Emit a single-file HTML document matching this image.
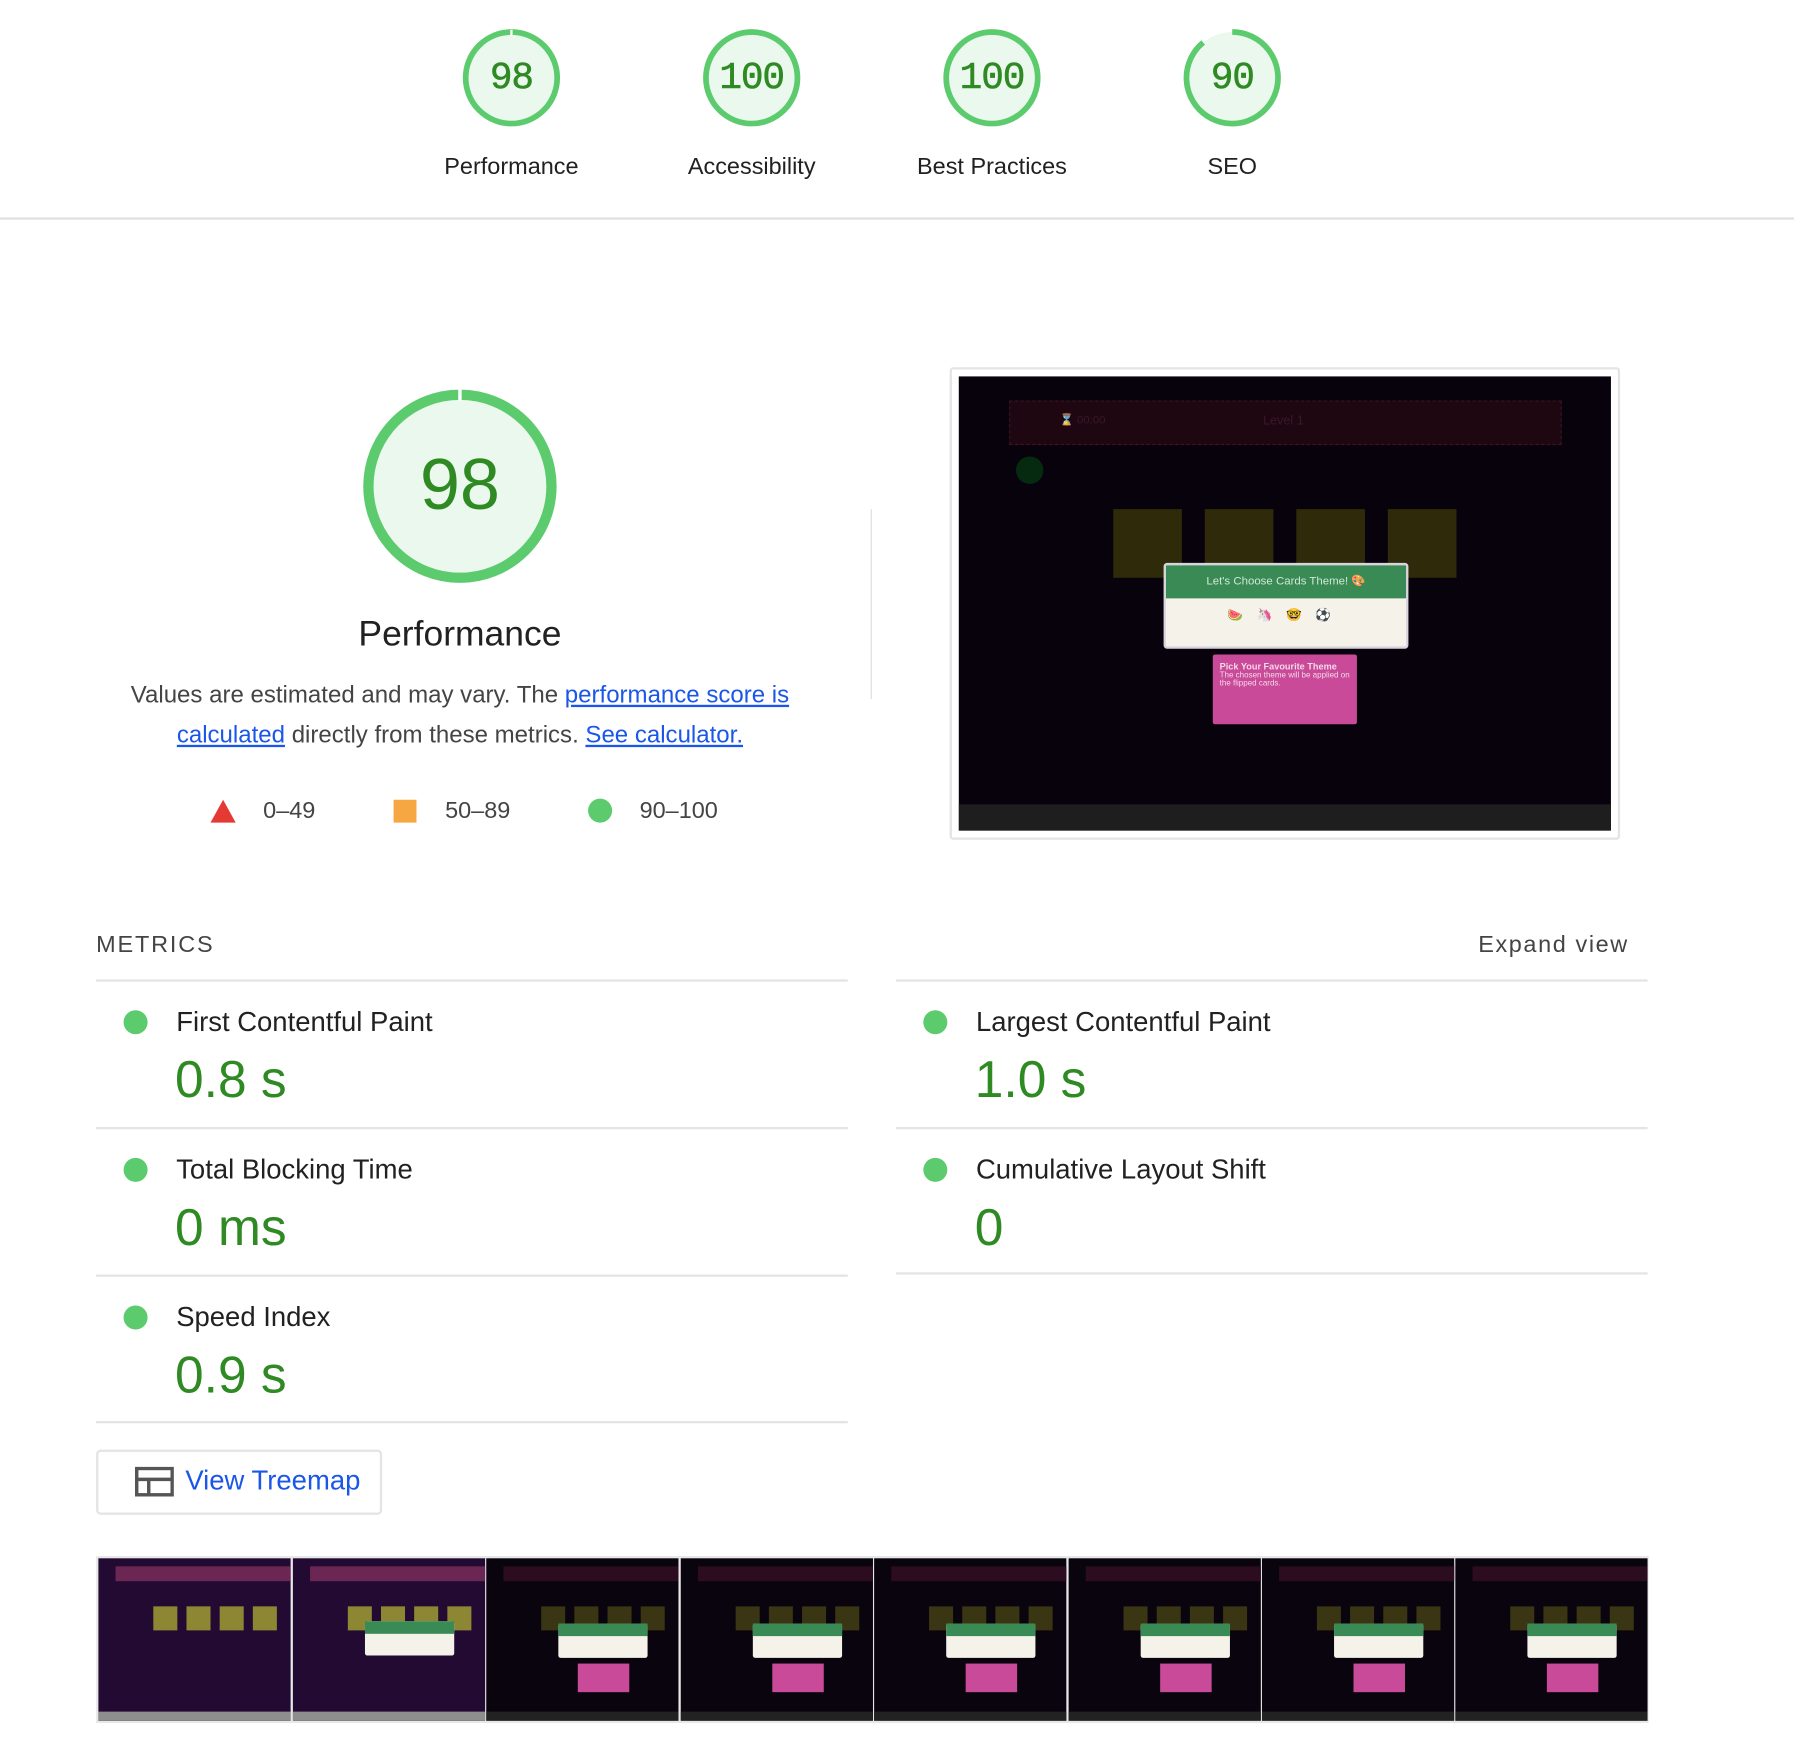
<!DOCTYPE html>
<html><head><meta charset="utf-8"><style>
html,body{margin:0;padding:0;background:#fff;width:1794px;height:1746px;overflow:hidden}
#w{position:absolute;left:0;top:0;width:1568px;height:1526px;transform:scale(1.14413);transform-origin:0 0;font-family:"Liberation Sans",Arial,sans-serif;color:#212121}
.a{position:absolute}
.gn{position:absolute;left:0;top:0;width:84px;line-height:84px;text-align:center;font-family:"Liberation Mono",monospace;font-size:33px;color:#2f8a24;letter-spacing:-1px;-webkit-text-stroke:0.5px #2f8a24}
.gl{position:absolute;width:200px;text-align:center;font-size:20.5px;top:134px}
.mt{position:absolute;font-size:24px;color:#212121}
.mv{position:absolute;font-size:45px;color:#2f8a24}
.dot{position:absolute;width:21px;height:21px;border-radius:50%;background:#5ccb6d}
.hl{position:absolute;height:2px;background:#e4e4e4;width:657px}
a{color:#1a56e8;text-decoration:underline}
.fr{position:absolute;top:1362px;width:168px;height:142px;overflow:hidden;background:#0a040e}
.fr.p{background:#230a33}
.fr .hd{position:absolute;left:15px;top:7px;width:160px;height:13px;background:#2c0d20}
.fr.p .hd{background:#6b2653}
.fr .cd{position:absolute;top:42px;width:21px;height:21px;background:#3a3512}
.fr.p .cd{background:#8d8733}
.fr .bt{position:absolute;left:0;bottom:0;width:168px;height:8px;background:#222}
.fr.p .bt{background:#8e8e8e}
.fr .md{position:absolute;left:63px;top:57px;width:78px;height:30px;background:#f5f2ea;border-radius:2px}
.fr .md div{height:11px;background:#3a8a55}
.fr .tp{position:absolute;left:80px;top:92px;width:45px;height:25px;background:#c84a98}
</style></head><body><div id="w">

<svg class="a" style="left:0;top:0" width="1568" height="190">
<g fill="#ebf8ee" stroke="#5ccb6d" stroke-width="5">
<circle cx="447" cy="68" r="40"/>
<circle cx="657" cy="68" r="40"/>
<circle cx="867" cy="68" r="40"/>
<circle cx="1077" cy="68" r="40" stroke="none"/>
</g>
<path d="M1077 28 A40 40 0 1 1 1051.6 37.1" fill="none" stroke="#5ccb6d" stroke-width="5"/>
<line x1="447" y1="26" x2="447" y2="31" stroke="#fff" stroke-width="2"/>
</svg>
<div class="gn" style="left:405px;top:27px">98</div>
<div class="gn" style="left:615px;top:27px">100</div>
<div class="gn" style="left:825px;top:27px">100</div>
<div class="gn" style="left:1035px;top:27px">90</div>
<div class="gl" style="left:347px">Performance</div>
<div class="gl" style="left:557px">Accessibility</div>
<div class="gl" style="left:767px">Best Practices</div>
<div class="gl" style="left:977px">SEO</div>
<div class="a" style="left:0;top:190px;width:1568px;height:2px;background:#e0e0e0"></div>

<svg class="a" style="left:312px;top:335px" width="180" height="180">
<circle cx="90" cy="90" r="80" fill="#ebf8ee" stroke="#5ccb6d" stroke-width="9"/>
<line x1="90" y1="4" x2="90" y2="15" stroke="#fff" stroke-width="3"/>
</svg>
<div class="a" style="left:312px;top:388px;width:180px;text-align:center;font-size:63px;color:#2f8a24">98</div>
<div class="a" style="left:202px;top:536px;width:400px;text-align:center;font-size:31px">Performance</div>
<div class="a" style="left:82px;top:591px;width:640px;text-align:center;font-size:21px;line-height:34.5px;color:#444">Values are estimated and may vary. The <a>performance score is calculated</a> directly from these metrics. <a>See calculator.</a></div>
<svg class="a" style="left:183px;top:697px" width="26" height="24"><polygon points="12,2 23,22 1,22" fill="#e53935"/></svg>
<div class="a" style="left:230px;top:697px;font-size:20.5px;color:#444">0–49</div>
<div class="a" style="left:344px;top:699px;width:20px;height:20px;background:#f6a742"></div>
<div class="a" style="left:389px;top:697px;font-size:20.5px;color:#444">50–89</div>
<div class="a" style="left:514px;top:698px;width:21px;height:21px;border-radius:50%;background:#5ccb6d"></div>
<div class="a" style="left:559px;top:697px;font-size:20.5px;color:#444">90–100</div>
<div class="a" style="left:761px;top:445px;width:1px;height:166px;background:#ddd"></div>

<div class="a" style="left:830px;top:321px;width:582px;height:409px;border:2px solid #e4e4e4;border-radius:3px;background:#fff"></div>
<div class="a" style="left:838px;top:329px;width:570px;height:397px;background:#07020b;overflow:hidden">
 <div class="a" style="left:44px;top:21px;width:481px;height:37px;background:#1e0711;border:1px dashed #3a1324"></div>
 <div class="a" style="left:88px;top:33px;font-size:10px;color:#3a1828">⌛ 00:00</div>
 <div class="a" style="left:266px;top:33px;font-size:11px;color:#3a1828">Level 1</div>
 <div class="a" style="left:50px;top:70px;width:24px;height:24px;border-radius:50%;background:#062a10"></div>
 <div class="a" style="left:135px;top:116px;width:60px;height:60px;background:#2f2a0a"></div>
 <div class="a" style="left:215px;top:116px;width:60px;height:60px;background:#2f2a0a"></div>
 <div class="a" style="left:295px;top:116px;width:60px;height:60px;background:#2f2a0a"></div>
 <div class="a" style="left:375px;top:116px;width:60px;height:60px;background:#2f2a0a"></div>
 <div class="a" style="left:179px;top:163px;width:210px;height:71px;background:#f5f2ea;border:2px solid #d8d4dd;border-radius:3px;overflow:hidden">
  <div style="height:29px;background:#3a8a55;color:#cfe8d5;font-size:10px;text-align:center;line-height:29px">Let's Choose Cards Theme! 🎨</div>
  <div style="text-align:center;padding-top:8px;font-size:11px;letter-spacing:12px">🍉🦄🤓⚽</div>
 </div>
 <div class="a" style="left:222px;top:243px;width:126px;height:61px;background:#c84a98;border-radius:2px;color:#f6d9ea;font-size:7px;padding:6px;box-sizing:border-box"><b style="font-size:8px">Pick Your Favourite Theme</b><br>The chosen theme will be applied on the flipped cards.</div>
 <div class="a" style="left:0;top:374px;width:570px;height:23px;background:#1e1e1e"></div>
</div>

<div class="a" style="left:84px;top:814px;font-size:20.5px;letter-spacing:1.6px;color:#444">METRICS</div>
<div class="a" style="left:1292px;top:814px;font-size:20.5px;letter-spacing:1.4px;color:#444">Expand view</div>
<div class="hl" style="left:84px;top:856px"></div><div class="hl" style="left:783px;top:856px"></div>
<div class="hl" style="left:84px;top:985px"></div><div class="hl" style="left:783px;top:985px"></div>
<div class="hl" style="left:84px;top:1114px"></div><div class="hl" style="left:783px;top:1112px"></div>
<div class="hl" style="left:84px;top:1242px"></div>

<div class="dot" style="left:108px;top:883px"></div><div class="mt" style="left:154px;top:880px">First Contentful Paint</div><div class="mv" style="left:153px;top:918px">0.8 s</div>
<div class="dot" style="left:807px;top:883px"></div><div class="mt" style="left:853px;top:880px">Largest Contentful Paint</div><div class="mv" style="left:852px;top:918px">1.0 s</div>
<div class="dot" style="left:108px;top:1012px"></div><div class="mt" style="left:154px;top:1009px">Total Blocking Time</div><div class="mv" style="left:153px;top:1047px">0 ms</div>
<div class="dot" style="left:807px;top:1012px"></div><div class="mt" style="left:853px;top:1009px">Cumulative Layout Shift</div><div class="mv" style="left:852px;top:1047px">0</div>
<div class="dot" style="left:108px;top:1141px"></div><div class="mt" style="left:154px;top:1138px">Speed Index</div><div class="mv" style="left:153px;top:1176px">0.9 s</div>

<div class="a" style="left:84px;top:1267px;width:246px;height:53px;border:2px solid #e4e4e4;border-radius:4px"></div>
<svg class="a" style="left:118px;top:1282px" width="34" height="26"><rect x="1.5" y="1.5" width="31" height="23" fill="none" stroke="#555" stroke-width="3"/><line x1="1" y1="11" x2="33" y2="11" stroke="#555" stroke-width="3"/><line x1="12" y1="11" x2="12" y2="25" stroke="#555" stroke-width="3"/></svg>
<div class="a" style="left:162px;top:1281px;font-size:24px;color:#1a56e8">View Treemap</div>

<div class="a" style="left:84px;top:1360px;width:1357px;height:146px;background:#e8e8e8"></div>
<div class="fr p" style="left:86px"><div class="hd"></div><div class="cd" style="left:48px"></div><div class="cd" style="left:77px"></div><div class="cd" style="left:106px"></div><div class="cd" style="left:135px"></div><div class="bt"></div></div>
<div class="fr p" style="left:256px"><div class="hd"></div><div class="cd" style="left:48px"></div><div class="cd" style="left:77px"></div><div class="cd" style="left:106px"></div><div class="cd" style="left:135px"></div><div class="md" style="top:55px"><div></div></div><div class="bt"></div></div>
<div class="fr" style="left:425px"><div class="hd"></div><div class="cd" style="left:48px"></div><div class="cd" style="left:77px"></div><div class="cd" style="left:106px"></div><div class="cd" style="left:135px"></div><div class="md"><div></div></div><div class="tp"></div><div class="bt"></div></div>
<div class="fr" style="left:595px"><div class="hd"></div><div class="cd" style="left:48px"></div><div class="cd" style="left:77px"></div><div class="cd" style="left:106px"></div><div class="cd" style="left:135px"></div><div class="md"><div></div></div><div class="tp"></div><div class="bt"></div></div>
<div class="fr" style="left:764px"><div class="hd"></div><div class="cd" style="left:48px"></div><div class="cd" style="left:77px"></div><div class="cd" style="left:106px"></div><div class="cd" style="left:135px"></div><div class="md"><div></div></div><div class="tp"></div><div class="bt"></div></div>
<div class="fr" style="left:934px"><div class="hd"></div><div class="cd" style="left:48px"></div><div class="cd" style="left:77px"></div><div class="cd" style="left:106px"></div><div class="cd" style="left:135px"></div><div class="md"><div></div></div><div class="tp"></div><div class="bt"></div></div>
<div class="fr" style="left:1103px"><div class="hd"></div><div class="cd" style="left:48px"></div><div class="cd" style="left:77px"></div><div class="cd" style="left:106px"></div><div class="cd" style="left:135px"></div><div class="md"><div></div></div><div class="tp"></div><div class="bt"></div></div>
<div class="fr" style="left:1272px"><div class="hd"></div><div class="cd" style="left:48px"></div><div class="cd" style="left:77px"></div><div class="cd" style="left:106px"></div><div class="cd" style="left:135px"></div><div class="md"><div></div></div><div class="tp"></div><div class="bt"></div></div>

</div></body></html>
